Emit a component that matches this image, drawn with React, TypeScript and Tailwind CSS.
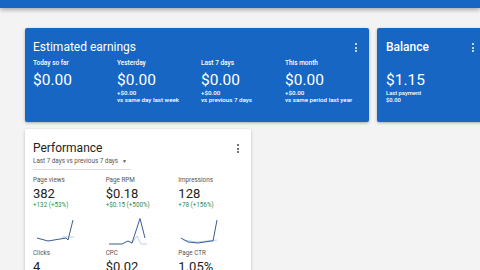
const font = { fontFamily: "Roboto, 'Liberation Sans', sans-serif" }

function Kebab({ className }: { className: string }) {
  return (
    <div className={`flex flex-col items-center gap-[1.5px] ${className}`}>
      <span className="w-[2px] h-[2px] rounded-full bg-current" />
      <span className="w-[2px] h-[2px] rounded-full bg-current" />
      <span className="w-[2px] h-[2px] rounded-full bg-current" />
    </div>
  )
}

const earnings = [
  { label: "Today so far", value: "$0.00" },
  { label: "Yesterday", value: "$0.00", delta: "+$0.00", note: "vs same day last week" },
  { label: "Last 7 days", value: "$0.00", delta: "+$0.00", note: "vs previous 7 days" },
  { label: "This month", value: "$0.00", delta: "+$0.00", note: "vs same period last year" },
]

const metrics = [
  {
    label: "Page views",
    value: "382",
    delta: "+132 (+53%)",
    dark: "5,20 16,23 25,21.5 34,20 36,22 41,2",
    light: "30,19 42,19",
  },
  {
    label: "Page RPM",
    value: "$0.18",
    delta: "+$0.15 (+500%)",
    dark: "4,26 17,26 23,23 27,25 35,0.5 40,20",
    light: "26,26 32,18 36,26 42,26",
  },
  {
    label: "Impressions",
    value: "128",
    delta: "+78 (+156%)",
    dark: "4,20 11,24 21,25 34,23 36,23 40,2",
    light: "6,22 20,24 40,22",
  },
]

const lower = [
  { label: "Clicks", value: "4" },
  { label: "CPC", value: "$0.02" },
  { label: "Page CTR", value: "1.05%" },
]

export default function App() {
  return (
    <div className="w-[480px] h-[270px] overflow-hidden bg-[#f3f3f3]" style={font}>
      <div className="h-[8px] bg-[#1766c4] shadow-[0_2px_4px_rgba(0,0,0,0.3)]" />

      <div className="pl-[25px] pt-[20px]">
        <div className="flex gap-[8px]">
          {/* Estimated earnings */}
          <div className="relative w-[344px] h-[94px] flex-shrink-0 rounded-[2px] bg-[#1766c4] text-white pl-[8px] pt-[11px] shadow-[0_1px_3px_rgba(0,0,0,0.3)]">
            <div className="text-[12px] leading-[16px]">Estimated earnings</div>
            <Kebab className="absolute right-[12px] top-[15px] text-white" />
            <div className="flex mt-[4px]">
              {earnings.map((e) => (
                <div key={e.label} className="w-[84px]">
                  <div className="text-[6.5px] leading-[9px] font-medium">{e.label}</div>
                  <div className="text-[15.5px] leading-[18px] mt-[3px]">{e.value}</div>
                  {e.delta && (
                    <>
                      <div className="text-[6.2px] leading-[7px] font-medium mt-[1px]">{e.delta}</div>
                      <div className="text-[6.2px] leading-[7px] font-medium">{e.note}</div>
                    </>
                  )}
                </div>
              ))}
            </div>
          </div>

          {/* Balance */}
          <div className="relative w-[130px] h-[94px] flex-shrink-0 rounded-[2px] bg-[#1766c4] text-white pl-[9px] pt-[11px] shadow-[0_1px_3px_rgba(0,0,0,0.3)]">
            <div className="text-[12px] leading-[16px] font-medium">Balance</div>
            <Kebab className="absolute left-[95px] top-[15px] text-white" />
            <div className="text-[15.5px] leading-[18px] mt-[16px]">$1.15</div>
            <div className="text-[5.8px] leading-[6.5px] font-medium mt-[1px]">Last payment</div>
            <div className="text-[5.8px] leading-[6.5px] font-medium">$0.00</div>
          </div>
        </div>

        {/* Performance */}
        <div className="relative mt-[7px] w-[226px] h-[160px] rounded-[2px] bg-white pl-[8px] pt-[11px] shadow-[0_1px_3px_rgba(0,0,0,0.25)]">
          <div className="text-[12px] leading-[16px] text-[#222]">Performance</div>
          <Kebab className="absolute right-[12px] top-[15px] text-[#444]" />
          <div className="mt-[1px] w-[98px] border-b border-[#ddd] pb-[3px] flex items-center gap-[3px] text-[6.3px] leading-[9px] text-[#555]">
            <span>Last 7 days vs previous 7 days</span>
            <span className="text-[5px] ml-[1px]">▼</span>
          </div>

          <div className="flex mt-[6px]">
            {metrics.map((m) => (
              <div key={m.label} className="w-[73px]">
                <div className="text-[6.3px] leading-[9px] text-[#555]">{m.label}</div>
                <div className="text-[13px] leading-[14px] text-[#222] mt-[2px]">{m.value}</div>
                <div className="text-[6.3px] leading-[8px] text-[#2e8b57]">{m.delta}</div>
                <svg width="46" height="28" viewBox="0 0 46 28" className="mt-[9px] -ml-[1px]">
                  <polyline points={m.light} fill="none" stroke="#a9c3e6" strokeWidth="0.8" />
                  <polyline points={m.dark} fill="none" stroke="#3a5a98" strokeWidth="1" />
                </svg>
              </div>
            ))}
          </div>

          <div className="flex mt-[3px]">
            {lower.map((m) => (
              <div key={m.label} className="w-[73px]">
                <div className="text-[6.3px] leading-[9px] text-[#555]">{m.label}</div>
                <div className="text-[13px] leading-[14px] text-[#222] mt-[2px]">{m.value}</div>
              </div>
            ))}
          </div>
        </div>
      </div>
    </div>
  )
}
